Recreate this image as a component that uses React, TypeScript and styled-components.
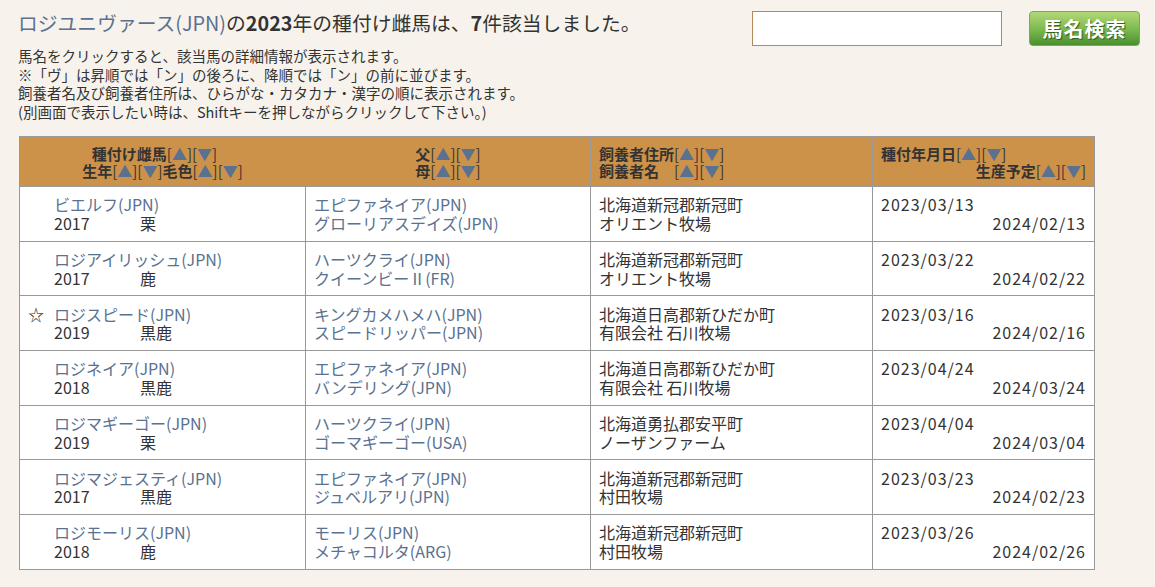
import React from "react";
import styled, { createGlobalStyle } from "styled-components";

const GlobalStyle = createGlobalStyle`
  body {
    margin: 0;
    background: #f7f3ec;
    font-family: "Noto Sans CJK JP", "Noto Sans", sans-serif;
    color: #333;
  }
`;

const Page = styled.div`
  padding: 8px 15px 0 19px;
  width: 1155px;
  box-sizing: border-box;
`;

const TopBar = styled.div`
  display: flex;
  align-items: flex-start;
`;

const Intro = styled.div`
  flex: 1;
`;

const Title = styled.h1`
  margin: 0 0 0 -1px;
  font-size: 19.8px;
  font-weight: normal;
  line-height: 30px;

  b {
    font-weight: bold;
  }
`;

const LinkText = styled.span`
  color: #5a7190;
`;

const Notes = styled.p`
  margin: 9px 0 0 -1px;
  font-size: 14.5px;
  line-height: 18.5px;
`;

const Search = styled.div`
  display: flex;
  gap: 27px;
  padding-top: 3px;
`;

const SearchInput = styled.input`
  width: 250px;
  height: 35px;
  box-sizing: border-box;
  border: 1px solid #b4895a;
  background: #fff;
`;

const SearchButton = styled.button`
  width: 111px;
  height: 35px;
  border: 1px solid #78a858;
  border-radius: 4px;
  background: linear-gradient(#b2d87a, #7ab84c 55%, #4a8f30);
  color: #fff;
  font-family: "Noto Sans CJK JP", serif;
  font-size: 20px;
  font-weight: bold;
  letter-spacing: 1px;
  text-shadow: 1px 1px 1px #2d5a1c;
  padding: 0;
`;

const Table = styled.table`
  margin-top: 15px;
  width: 1075px;
  table-layout: fixed;
  border-collapse: collapse;
  background: #fff;
  font-size: 16px;
`;

const HeadCell = styled.th<{ $align?: string; $w: number }>`
  width: ${(p) => p.$w}px;
  box-sizing: border-box;
  height: 50px;
  background: #cd9249;
  border: 1px solid #999;
  font-size: 15px;
  font-weight: bold;
  line-height: 17px;
  text-align: ${(p) => p.$align || "center"};
  padding: 0 8px;
  color: #333;
`;

const Sort = styled.span`
  font-weight: normal;
  a {
    color: #5a7190;
    font-weight: normal;
  }
`;

const Line = styled.div<{ $align?: string; $padRight?: number }>`
  text-align: ${(p) => p.$align || "left"};
  padding-right: ${(p) => p.$padRight || 0}px;
  white-space: nowrap;
`;

const Cell = styled.td`
  height: 54.7px;
  box-sizing: border-box;
  border: 1px solid #999;
  padding: 0 8px;
  line-height: 18.5px;
  vertical-align: middle;
`;

const HorseBox = styled.div`
  display: grid;
  grid-template-columns: 26px 86px auto;
`;

const Star = styled.span`
  grid-row: 1;
  font-size: 16px;
`;

const Name = styled.a`
  grid-column: 2 / 4;
  color: #5a7190;
  text-decoration: none;
`;

const Year = styled.span`
  grid-column: 2;
`;

const Link = styled.a`
  display: block;
  color: #5a7190;
  text-decoration: none;
  white-space: nowrap;
`;

const DateText = styled(Line)`
  letter-spacing: 1px;
`;

const SortPair = () => (
  <Sort>
    [<a>▲</a>][<a>▼</a>]
  </Sort>
);

type Row = {
  star?: boolean;
  name: string;
  year: string;
  coat: string;
  sire: string;
  dam: string;
  addr: string;
  owner: string;
  date: string;
  due: string;
};

const rows: Row[] = [
  { name: "ビエルフ(JPN)", year: "2017", coat: "栗", sire: "エピファネイア(JPN)", dam: "グローリアスデイズ(JPN)", addr: "北海道新冠郡新冠町", owner: "オリエント牧場", date: "2023/03/13", due: "2024/02/13" },
  { name: "ロジアイリッシュ(JPN)", year: "2017", coat: "鹿", sire: "ハーツクライ(JPN)", dam: "クイーンビーⅡ(FR)", addr: "北海道新冠郡新冠町", owner: "オリエント牧場", date: "2023/03/22", due: "2024/02/22" },
  { star: true, name: "ロジスピード(JPN)", year: "2019", coat: "黒鹿", sire: "キングカメハメハ(JPN)", dam: "スピードリッパー(JPN)", addr: "北海道日高郡新ひだか町", owner: "有限会社 石川牧場", date: "2023/03/16", due: "2024/02/16" },
  { name: "ロジネイア(JPN)", year: "2018", coat: "黒鹿", sire: "エピファネイア(JPN)", dam: "バンデリング(JPN)", addr: "北海道日高郡新ひだか町", owner: "有限会社 石川牧場", date: "2023/04/24", due: "2024/03/24" },
  { name: "ロジマギーゴー(JPN)", year: "2019", coat: "栗", sire: "ハーツクライ(JPN)", dam: "ゴーマギーゴー(USA)", addr: "北海道勇払郡安平町", owner: "ノーザンファーム", date: "2023/04/04", due: "2024/03/04" },
  { name: "ロジマジェスティ(JPN)", year: "2017", coat: "黒鹿", sire: "エピファネイア(JPN)", dam: "ジュベルアリ(JPN)", addr: "北海道新冠郡新冠町", owner: "村田牧場", date: "2023/03/23", due: "2024/02/23" },
  { name: "ロジモーリス(JPN)", year: "2018", coat: "鹿", sire: "モーリス(JPN)", dam: "メチャコルタ(ARG)", addr: "北海道新冠郡新冠町", owner: "村田牧場", date: "2023/03/26", due: "2024/02/26" },
];

export default function App() {
  return (
    <Page>
      <GlobalStyle />
      <TopBar>
        <Intro>
          <Title>
            <LinkText>ロジユニヴァース(JPN)</LinkText>の<b>2023</b>年の種付け雌馬は、<b>7</b>件該当しました。
          </Title>
          <Notes>
            馬名をクリックすると、該当馬の詳細情報が表示されます。
            <br />
            ※「ヴ」は昇順では「ン」の後ろに、降順では「ン」の前に並びます。
            <br />
            飼養者名及び飼養者住所は、ひらがな・カタカナ・漢字の順に表示されます。
            <br />
            (別画面で表示したい時は、Shiftキーを押しながらクリックして下さい。)
          </Notes>
        </Intro>
        <Search>
          <SearchInput type="text" />
          <SearchButton>馬名検索</SearchButton>
        </Search>
      </TopBar>
      <Table>
        <thead>
          <tr>
            <HeadCell $w={286}>
              <Line $align="center" $padRight={16}>
                種付け雌馬<SortPair />
              </Line>
              <Line $align="center">
                生年<SortPair />毛色<SortPair />
              </Line>
            </HeadCell>
            <HeadCell $w={285}>
              <Line $align="center">
                父<SortPair />
              </Line>
              <Line $align="center">
                母<SortPair />
              </Line>
            </HeadCell>
            <HeadCell $w={282} $align="left">
              <Line>
                飼養者住所<SortPair />
              </Line>
              <Line>
                飼養者名　<SortPair />
              </Line>
            </HeadCell>
            <HeadCell $w={222} $align="left">
              <Line>
                種付年月日<SortPair />
              </Line>
              <Line $align="right">
                生産予定<SortPair />
              </Line>
            </HeadCell>
          </tr>
        </thead>
        <tbody>
          {rows.map((r) => (
            <tr key={r.name}>
              <Cell>
                <HorseBox>
                  <Star>{r.star ? "☆" : ""}</Star>
                  <Name>{r.name}</Name>
                  <Year>{r.year}</Year>
                  <span>{r.coat}</span>
                </HorseBox>
              </Cell>
              <Cell>
                <Link>{r.sire}</Link>
                <Link>{r.dam}</Link>
              </Cell>
              <Cell>
                <Line>{r.addr}</Line>
                <Line>{r.owner}</Line>
              </Cell>
              <Cell>
                <DateText>{r.date}</DateText>
                <DateText $align="right">{r.due}</DateText>
              </Cell>
            </tr>
          ))}
        </tbody>
      </Table>
    </Page>
  );
}
